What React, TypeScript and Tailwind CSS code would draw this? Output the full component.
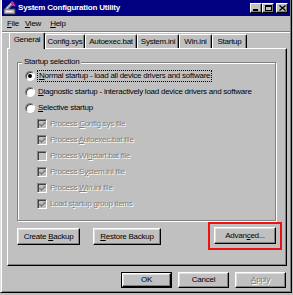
import React from "react";

const FONT = "font-['Liberation_Sans',Arial,sans-serif] text-[8px] leading-none tracking-[-0.25px]";
const BEVEL =
  "border border-t-white border-l-white border-r-black border-b-black shadow-[inset_-1px_-1px_0_#808080,inset_1px_1px_0_#dfdfdf]";
const DIS = "text-[#808080] [text-shadow:1px_1px_0_#ffffff]";

function Btn({
  children,
  className = "",
  def = false,
  disabled = false,
}: {
  children: React.ReactNode;
  className?: string;
  def?: boolean;
  disabled?: boolean;
}) {
  if (def) {
    return (
      <div className={`border border-black ${className} flex`}>
        <div className={`${BEVEL} flex-1 flex items-center justify-center text-black`}>{children}</div>
      </div>
    );
  }
  return (
    <div className={`${BEVEL} ${className} flex items-center justify-center ${disabled ? DIS : "text-black"}`}>
      {children}
    </div>
  );
}

function TitleBtn({ children, className = "" }: { children: React.ReactNode; className?: string }) {
  return (
    <div
      className={`w-[12px] h-[10px] bg-[#c0c0c0] border border-t-white border-l-white border-r-black border-b-black shadow-[inset_-1px_-1px_0_#808080] flex items-center justify-center ${className}`}
    >
      {children}
    </div>
  );
}

function Radio({ checked }: { checked?: boolean }) {
  return (
    <div className="w-[10px] h-[10px] rounded-full border border-t-[#808080] border-l-[#808080] border-r-white border-b-white bg-white shadow-[inset_1px_1px_0_#404040] flex items-center justify-center shrink-0">
      {checked && <div className="w-[4px] h-[4px] rounded-full bg-black" />}
    </div>
  );
}

function Check({ checked }: { checked?: boolean }) {
  return (
    <div className="w-[10px] h-[10px] border border-t-[#808080] border-l-[#808080] border-r-white border-b-white bg-[#c0c0c0] shadow-[inset_1px_1px_0_#404040] flex items-center justify-center shrink-0">
      {checked && (
        <svg width="7" height="7" viewBox="0 0 7 7">
          <path d="M0.5 3 L2.5 5 L6.5 1" stroke="#808080" strokeWidth="1.6" fill="none" />
        </svg>
      )}
    </div>
  );
}

function Tab({ label, w, selected }: { label: React.ReactNode; w: string; selected?: boolean }) {
  if (selected) {
    return (
      <div
        className={`${w} h-[17px] -mb-[1px] relative z-10 bg-[#c0c0c0] border-t border-l border-t-white border-l-white border-r border-r-black shadow-[inset_-1px_0_0_#808080] rounded-t-[2px] flex items-center justify-center pb-[2px]`}
      >
        {label}
      </div>
    );
  }
  return (
    <div
      className={`${w} h-[14px] bg-[#c0c0c0] border-t border-l border-t-white border-l-white border-r border-r-black shadow-[inset_-1px_0_0_#808080] rounded-t-[2px] flex items-center justify-center`}
    >
      {label}
    </div>
  );
}

export default function App() {
  const checks: [React.ReactNode, boolean][] = [
    [<>Process <span className="underline">C</span>onfig.sys file</>, true],
    [<>Process <span className="underline">A</span>utoexec.bat file</>, true],
    [<>Process Wi<span className="underline">n</span>start.bat file</>, false],
    [<>Process S<span className="underline">y</span>stem.ini file</>, true],
    [<>Process <span className="underline">W</span>in.ini file</>, true],
    [<>Load s<span className="underline">t</span>artup group items</>, true],
  ];

  return (
    <div className={`w-[293px] h-[295px] bg-[#c0c0c0] overflow-hidden ${FONT}`}>
      <div className="w-[292px] h-[293px] flex flex-col border-l border-l-[#dfdfdf] border-r border-r-black border-b border-b-black shadow-[inset_1px_0_0_#ffffff,inset_-1px_-1px_0_#808080] px-[1px]">
        {/* title bar */}
        <div className="h-[16px] bg-[#000080] flex items-center pl-[1px] pr-[2px] shrink-0">
          <svg width="14" height="14" viewBox="0 0 14 14" className="shrink-0">
            <rect x="1" y="8" width="11" height="5" fill="#c0c0c0" stroke="#404040" strokeWidth="1" />
            <rect x="3" y="10" width="6" height="1" fill="#ffffff" />
            <path d="M3 8 L10 1" stroke="#c0c0c0" strokeWidth="2" />
            <path d="M8 1 L12 5" stroke="#d0209a" strokeWidth="2" />
            <path d="M5 8 L11 3" stroke="#808080" strokeWidth="1" />
          </svg>
          <span className="ml-[1px] text-white font-bold tracking-[-0.2px]">System Configuration Utility</span>
          <div className="ml-auto flex items-center">
            <TitleBtn>
              <div className="w-[5px] h-[2px] bg-black mt-[4px] -ml-[1px]" />
            </TitleBtn>
            <TitleBtn>
              <div className="w-[7px] h-[6px] border border-black border-t-2" />
            </TitleBtn>
            <TitleBtn className="ml-[2px]">
              <svg width="7" height="6" viewBox="0 0 7 6">
                <path d="M0.5 0.5 L6.5 5.5 M6.5 0.5 L0.5 5.5" stroke="black" strokeWidth="1.4" />
              </svg>
            </TitleBtn>
          </div>
        </div>

        {/* menu bar */}
        <div className="h-[14px] mt-[1px] flex items-center text-black shrink-0">
          <span className="ml-[5px]">
            <span className="underline">F</span>ile
          </span>
          <span className="ml-[6px]">
            <span className="underline">V</span>iew
          </span>
          <span className="ml-[9px]">
            <span className="underline">H</span>elp
          </span>
        </div>
        <div className="h-[1px] bg-[#808080] shrink-0" />
        <div className="h-[1px] bg-white shrink-0" />

        {/* tabs */}
        <div className="h-[15px] ml-[5px] pl-[2px] flex items-end text-black shrink-0">
          <Tab selected w="w-[36px]" label="General" />
          <Tab w="w-[40px]" label="Config.sys" />
          <Tab w="w-[52px]" label="Autoexec.bat" />
          <Tab w="w-[42px]" label="System.ini" />
          <Tab w="w-[33px]" label="Win.ini" />
          <Tab w="w-[35px]" label="Startup" />
        </div>

        {/* panel */}
        <div className="w-[280px] h-[218px] ml-[5px] border border-t-white border-l-white border-r-black border-b-black shadow-[inset_-1px_-1px_0_#808080] flex flex-col shrink-0">
          <div className="relative w-[259px] h-[159px] ml-[9px] mt-[13px] border border-[#808080] shadow-[inset_1px_1px_0_#ffffff,1px_1px_0_#ffffff] pt-[5px] flex flex-col">
            <span className="absolute -top-[5px] left-[4px] bg-[#c0c0c0] px-[2px] text-black">Startup selection</span>
            <div className="h-[16px] flex items-center pl-[7px] text-black">
              <Radio checked />
              <span className="ml-[2px] border border-dotted border-black px-[1px] py-[1px]">
                <span className="underline">N</span>ormal startup - load all device drivers and software
              </span>
            </div>
            <div className="h-[16px] flex items-center pl-[7px] text-black">
              <Radio />
              <span className="ml-[3px]">
                <span className="underline">D</span>iagnostic startup - interactively load device drivers and software
              </span>
            </div>
            <div className="h-[16px] flex items-center pl-[7px] text-black">
              <Radio />
              <span className="ml-[3px]">
                <span className="underline">S</span>elective startup
              </span>
            </div>
            {checks.map(([label, c], i) => (
              <div key={i} className="h-[16px] flex items-center pl-[19px]">
                <Check checked={c} />
                <span className={`ml-[3px] ${DIS}`}>{label}</span>
              </div>
            ))}
          </div>

          <div className="flex items-start ml-[9px] mr-[4px] mt-[1px]">
            <Btn className="w-[63px] h-[17px] mt-[6px]">
              <span>
                Create <span className="underline">B</span>ackup
              </span>
            </Btn>
            <Btn className="w-[68px] h-[17px] mt-[6px] ml-[13px]">
              <span>
                <span className="underline">R</span>estore Backup
              </span>
            </Btn>
            <div className="ml-auto border-2 border-[#ee1111] pt-[3px] pb-[4px] px-[4px]">
              <Btn className="w-[62px] h-[17px]">
                <span>
                  Advan<span className="underline">c</span>ed...
                </span>
              </Btn>
            </div>
          </div>
        </div>

        {/* bottom buttons */}
        <div className="flex justify-end gap-[6px] mr-[4px] mt-[6px] shrink-0">
          <Btn def className="w-[51px] h-[16px]">
            OK
          </Btn>
          <Btn className="w-[51px] h-[16px]">Cancel</Btn>
          <Btn disabled className="w-[51px] h-[16px]">
            <span>
              <span className="underline">A</span>pply
            </span>
          </Btn>
        </div>
      </div>
    </div>
  );
}
